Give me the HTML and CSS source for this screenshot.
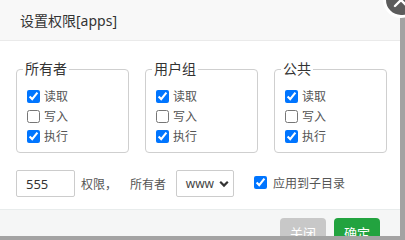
FILE: index.html
```html
<!DOCTYPE html>
<html lang="zh-CN">
<head>
<meta charset="utf-8">
<title>设置权限</title>
<link rel="stylesheet" href="styles.css">
</head>
<body>
<div class="dialog">
  <div class="header">设置权限[apps]</div>
  <div class="content">
    <div class="groups">
      <fieldset class="group">
        <legend>所有者</legend>
        <label class="row"><input type="checkbox" checked> 读取</label>
        <label class="row"><input type="checkbox"> 写入</label>
        <label class="row"><input type="checkbox" checked> 执行</label>
      </fieldset>
      <fieldset class="group">
        <legend>用户组</legend>
        <label class="row"><input type="checkbox" checked> 读取</label>
        <label class="row"><input type="checkbox"> 写入</label>
        <label class="row"><input type="checkbox" checked> 执行</label>
      </fieldset>
      <fieldset class="group">
        <legend>公共</legend>
        <label class="row"><input type="checkbox" checked> 读取</label>
        <label class="row"><input type="checkbox"> 写入</label>
        <label class="row"><input type="checkbox" checked> 执行</label>
      </fieldset>
    </div>
    <div class="options">
      <input class="mode" type="text" value="555">
      <span class="lbl">权限，</span>
      <span class="lbl owner">所有者</span>
      <div class="select">
        <span>www</span>
        <svg width="10" height="8" viewBox="0 0 10 8"><path d="M1.2 1.8 L5 5.6 L8.8 1.8" fill="none" stroke="#333" stroke-width="2.2"/></svg>
      </div>
      <label class="sub"><input type="checkbox" checked> 应用到子目录</label>
    </div>
  </div>
  <div class="footer">
    <button class="btn btn-close">关闭</button>
    <button class="btn btn-ok">确定</button>
  </div>
  <div class="close-x">
    <svg width="30" height="30" viewBox="0 0 30 30"><path d="M9 9 L21 21 M21 9 L9 21" stroke="#fff" stroke-width="2.4" stroke-linecap="round"/></svg>
  </div>
</div>
</body>
</html>
```

FILE: styles.css
```css
html, body {
  margin: 0;
  padding: 0;
  width: 405px;
  height: 236px;
  overflow: hidden;
  background: #a3a3a3;
}
body {
  position: relative;
  font-family: "Noto Sans", "Noto Sans CJK SC", sans-serif;
  color: #333;
}
.dialog {
  position: relative;
  width: 400px;
  height: 236px;
  background: #fff;
  display: flex;
  flex-direction: column;
}
.header {
  flex: none;
  height: 40px;
  line-height: 42px;
  padding-left: 20px;
  font-size: 14px;
  background: #f8f8f8;
  border-bottom: 1px solid #eaeaea;
  color: #333;
}
.content {
  flex: none;
  box-sizing: border-box;
  height: 168px;
  padding: 18px 0 0 16px;
  background: #fff;
}
.groups {
  display: grid;
  grid-template-columns: 113px 113px 113px;
  column-gap: 16px;
}
.group {
  margin: 0;
  padding: 7px 6px 6px 6px;
  border: 1px solid #cfcfcf;
  border-radius: 4px;
  min-width: 0;
}
.group legend {
  padding: 0 2px;
  font-size: 14px;
  line-height: 20px;
  color: #333;
}
.row {
  display: flex;
  align-items: center;
  height: 20px;
  margin-left: 4px;
  font-size: 12px;
  color: #555;
}
.row input,
.sub input {
  margin: 0 4px 0 0;
  width: 13px;
  height: 13px;
}
.options {
  display: flex;
  align-items: center;
  margin-top: 17px;
  height: 27px;
  font-size: 12px;
  color: #555;
}
.mode {
  box-sizing: border-box;
  width: 59px;
  height: 27px;
  margin: 0;
  padding: 0 0 0 9px;
  border: 1px solid #ccc;
  border-radius: 2px;
  font-family: "Noto Sans", sans-serif;
  font-size: 13px;
  color: #333;
  outline: none;
}
.lbl {
  margin-left: 6px;
}
.lbl.owner {
  margin-left: 13px;
}
.select {
  box-sizing: border-box;
  width: 58px;
  height: 27px;
  margin-left: 10px;
  border: 1px solid #ccc;
  border-radius: 2px;
  display: flex;
  align-items: center;
  justify-content: flex-end;
  gap: 5px;
  padding-right: 4px;
  font-size: 12px;
  color: #444;
}
.sub {
  display: flex;
  align-items: center;
  margin-left: 20px;
  margin-top: -2px;
  font-size: 12px;
  color: #555;
}
.sub input {
  margin-right: 6px;
}
.footer {
  flex: 1;
  min-height: 0;
  overflow: hidden;
  box-sizing: border-box;
  border-top: 1px solid #e8ecec;
  background: #f5f6f6;
  display: flex;
  justify-content: flex-end;
  align-items: flex-start;
  gap: 8px;
  padding: 8px 20px 0 0;
}
.btn {
  flex: none;
  width: 46px;
  height: 30px;
  border: none;
  border-radius: 4px;
  font-family: "Noto Sans", "Noto Sans CJK SC", sans-serif;
  font-size: 13px;
  line-height: 30px;
  color: #fff;
  padding: 0;
}
.btn-close {
  background: #c8c8c8;
}
.btn-ok {
  background: #22a33f;
}
.close-x {
  position: absolute;
  left: 383px;
  top: -18px;
  width: 30px;
  height: 30px;
  border-radius: 50%;
  background: #5c5c5c;
  border: 3px solid #fff;
}
.close-x svg {
  display: block;
}
```
